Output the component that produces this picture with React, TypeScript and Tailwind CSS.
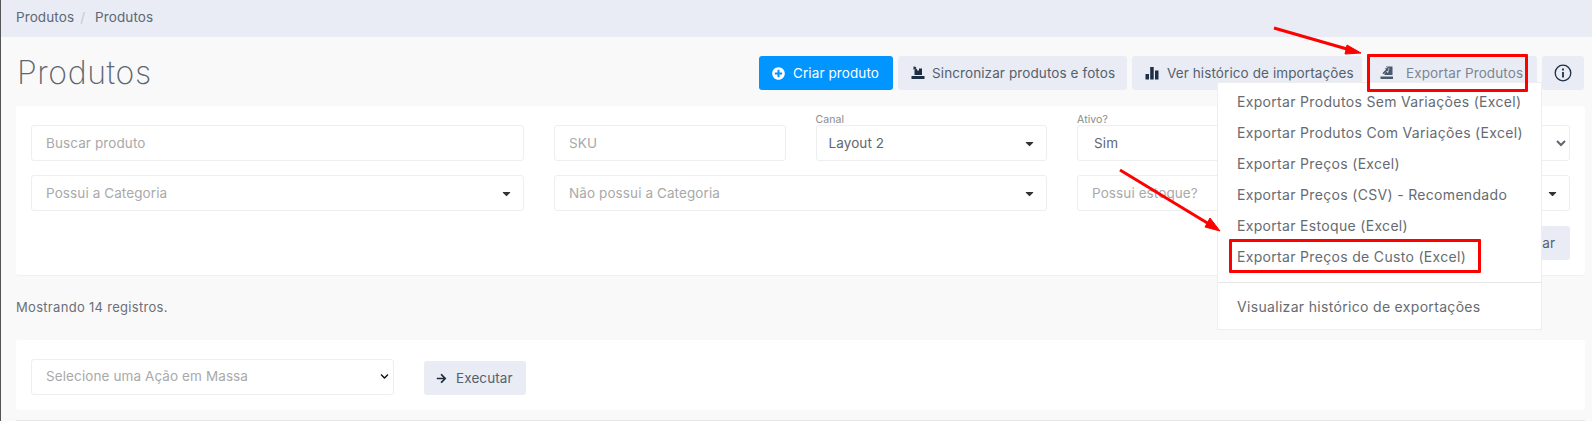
import React from 'react';
import { FaPlusCircle, FaArrowRight, FaCaretDown, FaChevronDown } from 'react-icons/fa';

const SyncIcon = () => (
  <svg viewBox="0 0 14 14" className="h-[14px] w-[14px]" fill="#1c2f45">
    <path d="M0.5 10h13v3h-13z" />
    <path d="M3.5 3.5h2l1.5 1.5 1-1V2.5h3V9h-7.5z" />
    <path d="M2.5 0.5l3 0.5-1 1 2 2-1 1-2-2-1 1z" />
  </svg>
);

const ExportIcon = () => (
  <svg viewBox="0 0 14 14" className="h-[14px] w-[14px]" fill="#4a5a6c">
    <path d="M0.5 10.5h12.5V13H0.5z" />
    <path d="M4.5 9V7.5L6.5 5.5 8 7l1.5-4.5L6 1V0.5h6.5V9z" />
    <path d="M2.5 7L6 3.5 4.8 2.3 8.6 2 8.3 5.8 7.2 4.7 3.6 8.2z" />
  </svg>
);

const BarsIcon = () => (
  <svg viewBox="0 0 14 14" className="h-[14px] w-[14px]" fill="#1c2f45">
    <path d="M0.5 8h3.5v5.5H0.5zM5.2 1h3.5v12.5H5.2zM10 4.5h3.5v9H10z" />
  </svg>
);

const InfoIcon = () => (
  <svg viewBox="0 0 18 18" className="h-[18px] w-[18px]" fill="none" stroke="#1c2f45" strokeWidth="1.3">
    <circle cx="9" cy="9" r="7.8" />
    <path d="M9 8v5.4" strokeWidth="1.8" />
    <path d="M9 4.6v1.8" strokeWidth="1.8" />
  </svg>
);

const Btn = ({ icon, label, dim, w, gap }: { icon: React.ReactNode; label: string; dim?: boolean; w: string; gap: string }) => (
  <button className={`flex h-[34px] items-center rounded-[3px] bg-[#e9ecf4] pl-[13px] pt-[1px] text-[13.5px] whitespace-nowrap ${gap} ${w} ${dim ? 'text-[#7b8694]' : 'text-[#55606d]'}`}>
    {icon}
    {label}
  </button>
);

const Field = ({ label, value, caret, className }: { label?: string; value: string; caret?: boolean; className: string }) => (
  <div className={`relative flex h-[36px] items-center justify-between rounded-[3px] border border-[#eceef0] bg-white pr-[10px] text-[13.5px] ${className}`}>
    {label && <span className="absolute left-[-1px] top-[-14px] text-[10.5px] text-[#8a8a8a]">{label}</span>}
    <span className={label ? 'text-[#5f6670]' : 'text-[#a9a9a9]'}>{value}</span>
    {caret && <FaCaretDown className="h-[13px] w-[13px] text-[#333]" />}
  </div>
);

const exportItems = [
  'Exportar Produtos Sem Variações (Excel)',
  'Exportar Produtos Com Variações (Excel)',
  'Exportar Preços (Excel)',
  'Exportar Preços (CSV) - Recomendado',
  'Exportar Estoque (Excel)',
  'Exportar Preços de Custo (Excel)',
];

export default function App() {
  return (
    <div className="relative h-[421px] w-full overflow-hidden border-l border-[#555] bg-[#f9f9f9] font-['Inter',sans-serif] tracking-[0.1px] text-[#5f6670]">
      {/* Breadcrumb */}
      <div className="flex h-[37px] items-center bg-[#e9ecf4] pb-[2px] pl-[15px] text-[13.5px] text-[#5d6875]">
        <span>Produtos</span>
        <span className="mx-[6px] text-[#c3c7cf]">/</span>
        <span className="ml-[4px]">Produtos</span>
      </div>

      {/* Title + actions */}
      <div className="flex h-[69px] items-center justify-between pl-[16px] pr-[8px] pt-[2px]">
        <h1 className="text-[32px] font-extralight tracking-[0.6px] text-[#5e6670]">Produtos</h1>
        <div className="flex gap-[5px]">
          <button className="flex h-[34px] w-[134px] items-center gap-[8px] rounded-[3px] bg-[#0095ff] pl-[13px] pt-[1px] text-[13.5px] text-white">
            <FaPlusCircle className="h-[13px] w-[13px]" />
            Criar produto
          </button>
          <Btn icon={<SyncIcon />} label="Sincronizar produtos e fotos" w="w-[229px]" gap="gap-[7px]" />
          <Btn icon={<BarsIcon />} label="Ver histórico de importações" w="w-[230px]" gap="gap-[8px]" />
          <Btn icon={<ExportIcon />} label="Exportar Produtos" dim w="w-[170px]" gap="gap-[12px]" />
          <button className="flex h-[34px] w-[42px] items-center justify-center rounded-[3px] bg-[#e9ecf4]">
            <InfoIcon />
          </button>
        </div>
      </div>

      {/* Filters */}
      <div className="ml-[15px] mr-[7px] rounded-[3px] bg-white px-[15px] pb-[15px] pt-[19px] shadow-[0_1px_1px_rgba(0,0,0,0.04)]">
        <div className="grid grid-cols-12 gap-x-[30px] gap-y-[14px]">
          <Field value="Buscar produto" className="col-span-4 pl-[14px]" />
          <Field value="SKU" className="col-span-2 pl-[14px]" />
          <Field label="Canal" value="Layout 2" caret className="col-span-2 pl-[12px]" />
          <Field label="Ativo?" value="Sim" className="col-span-2 pl-[16px]" />
          <select className="col-span-2 h-[36px] rounded-[3px] border border-[#eceef0] bg-white text-[13.5px]" />
          <Field value="Possui a Categoria" caret className="col-span-4 pl-[14px]" />
          <Field value="Não possui a Categoria" caret className="col-span-4 pl-[14px]" />
          <Field value="Possui estoque?" className="col-span-2 pl-[14px]" />
          <Field value="" caret className="col-span-2 pl-[14px]" />
        </div>
        <div className="mt-[15px] flex justify-end">
          <button className="h-[34px] w-[100px] rounded-[3px] bg-[#e9ecf4] pl-[26px] text-center text-[13.5px] text-[#55606d]">Limpar</button>
        </div>
      </div>

      <p className="ml-[15px] mt-[24px] text-[13px] leading-[16px] tracking-[0.3px] text-[#6a6f78]">Mostrando 14 registros.</p>

      {/* Bulk action */}
      <div className="ml-[15px] mr-[7px] mt-[25px] flex h-[70px] items-start gap-[30px] rounded-[3px] bg-white px-[15px] pt-[19px]">
        <div className="flex h-[36px] w-[363px] items-center justify-between rounded-[3px] border border-[#eceef0] bg-white pb-[2px] pl-[14px] pr-[4px] text-[13.5px] text-[#a9a9a9]">
          <span>Selecione uma Ação em Massa</span>
          <FaChevronDown className="h-[9px] w-[9px] text-[#111]" />
        </div>
        <button className="mt-[2px] flex h-[34px] w-[102px] items-center gap-[9px] rounded-[3px] bg-[#e9ecf4] pl-[12px] text-[13.5px] text-[#55606d]">
          <FaArrowRight className="h-[11px] w-[11px] text-[#1c2f45]" />
          Executar
        </button>
      </div>
      <div className="ml-[15px] mr-[7px] mt-[10px] border-t border-[#e6e6e6]" />

      {/* Open dropdown */}
      <div className="absolute left-[1216px] top-[82px] w-[325px] border border-[#eeeeee] bg-white pt-[3px] text-[14px] tracking-[0.32px] text-[#666b72]">
        {exportItems.map(item => (
          <div key={item} className="flex h-[31px] items-center pl-[19px] whitespace-nowrap">{item}</div>
        ))}
        <div className="mt-[10px] border-t border-[#e6e6e6]" />
        <div className="flex h-[46px] items-center pl-[19px] pt-[1px]">Visualizar histórico de exportações</div>
      </div>

      {/* Red annotations */}
      <div className="absolute left-[1366px] top-[54px] h-[38px] w-[161px] rounded-[1px] border-[3px] border-[#ff0000]" />
      <div className="absolute left-[1228px] top-[239px] h-[34px] w-[252px] rounded-[1px] border-[3px] border-[#ff0000]" />
      <svg className="pointer-events-none absolute left-0 top-0 h-[421px] w-[1592px]" viewBox="0 0 1592 421">
        <path d="M1273 28L1346 49" stroke="#ff0000" strokeWidth="3" />
        <path d="M1360 53L1344 54L1346 45z" fill="#ff0000" stroke="#ff0000" />
        <path d="M1119 170L1208 224" stroke="#ff0000" strokeWidth="3" />
        <path d="M1219 231L1204 227L1209 218z" fill="#ff0000" stroke="#ff0000" />
      </svg>
    </div>
  );
}
